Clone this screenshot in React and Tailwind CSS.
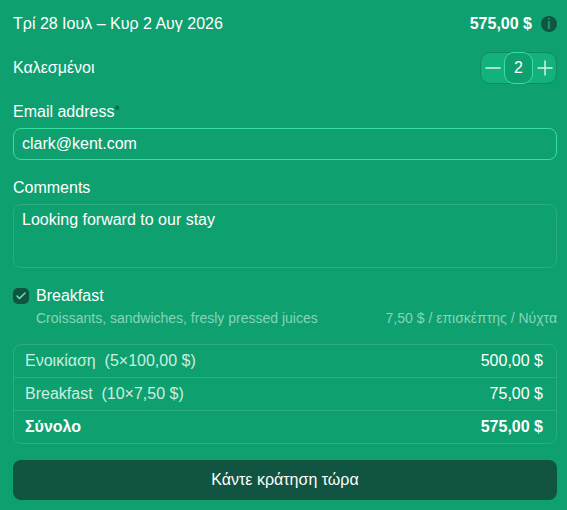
import { Check, Minus, Plus } from 'lucide-react'

const LINES = [
  { label: 'Ενοικίαση', detail: '(5×100,00 $)', amount: '500,00 $' },
  { label: 'Breakfast', detail: '(10×7,50 $)', amount: '75,00 $' }
]

export default function App() {
  return (
    <div className="h-[510px] w-[567px] overflow-hidden bg-[#0fa06f] pr-[10px] pl-[13px] font-['Liberation_Sans',sans-serif] text-base text-white">
      <div className="flex h-12 items-center justify-between">
        <span>Τρί 28 Ιουλ – Κυρ 2 Αυγ 2026</span>
        <div className="flex items-center gap-[9px]">
          <span className="font-bold">575,00 $</span>
          <span className="flex h-4 w-4 items-center justify-center rounded-full bg-[#115442] text-[#0fa06f]">
            <span className="text-[14px] leading-none font-bold">i</span>
          </span>
        </div>
      </div>

      <div className="mt-1 flex h-8 items-center justify-between">
        <span>Καλεσμένοι</span>
        <div className="flex h-8 w-[77px] items-center rounded-[10px] border border-[#0d8a61] bg-[#13b17c]">
          <button className="flex h-full w-[23px] shrink-0 items-center justify-center text-[#d5f5e8]">
            <Minus size={24} strokeWidth={1.5} className="shrink-0" />
          </button>
          <span className="flex h-8 w-[29px] shrink-0 items-center justify-center rounded-[10px] border border-[#34e0a1] bg-[#0fa06f]">2</span>
          <button className="flex h-full w-[23px] shrink-0 items-center justify-center text-[#d5f5e8]">
            <Plus size={24} strokeWidth={1.5} className="shrink-0" />
          </button>
        </div>
      </div>

      <div className="mt-4 flex h-6 items-center">
        Email address<span className="mb-1 text-sm text-[#115442]">*</span>
      </div>
      <div className="mt-1 flex h-8 items-center rounded-lg border border-[#34e0a1] px-2">clark@kent.com</div>

      <div className="mt-4 flex h-6 items-center">Comments</div>
      <div className="mt-1 h-16 rounded-lg border border-[#2bac81] px-2 py-[3px]">Looking forward to our stay</div>

      <div className="mt-4 flex gap-[7px]">
        <span className="mt-1 flex h-4 w-4 items-center justify-center rounded-[5px] bg-[#115442] text-[#6fe3b8]">
          <Check size={12} strokeWidth={3} />
        </span>
        <div className="flex-1">
          <div className="leading-6">Breakfast</div>
          <div className="flex justify-between text-sm leading-5 text-[#86d5b9]">
            <span>Croissants, sandwiches, fresly pressed juices</span>
            <span>7,50 $ / επισκέπτης / Νύχτα</span>
          </div>
        </div>
      </div>

      <div className="mt-4 rounded-lg border border-[#2bac81]">
        {LINES.map((l) => (
          <div key={l.label} className="flex h-[33px] items-center justify-between border-b border-[#2bac81] pr-[13px] pl-[11px]">
            <span className="text-[#cdeee1]">
              {l.label}&nbsp; {l.detail}
            </span>
            <span>{l.amount}</span>
          </div>
        ))}
        <div className="flex h-8 items-center justify-between pr-[13px] pl-[11px] font-bold">
          <span>Σύνολο</span>
          <span>575,00 $</span>
        </div>
      </div>

      <button className="mt-4 flex h-10 w-full items-center justify-center rounded-lg bg-[#115442]">Κάντε κράτηση τώρα</button>
    </div>
  )
}
